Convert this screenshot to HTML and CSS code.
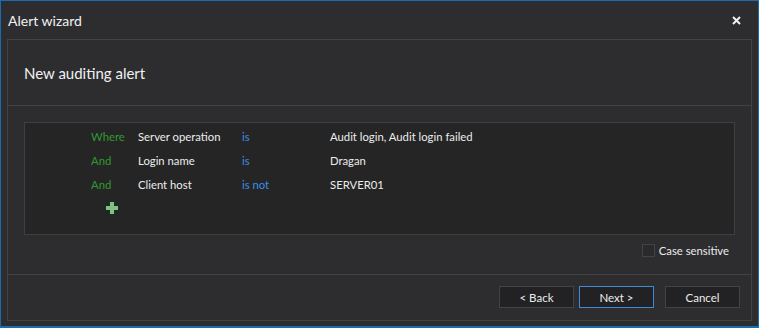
FILE: index.html
```html
<!DOCTYPE html>
<html lang="en">
<head>
    <meta charset="UTF-8">
    <title>Alert wizard</title>
    <link rel="stylesheet" href="styles.css">
</head>
<body>
    <div class="window">
        <div class="titlebar">
            <span class="title">Alert wizard</span>
            <button class="close" title="Close">
                <svg width="9" height="9" viewBox="0 0 9 9">
                    <path d="M1 1 L8 8 M8 1 L1 8" stroke="#f1f1f1" stroke-width="2" />
                </svg>
            </button>
        </div>

        <div class="panel">
            <div class="header">New auditing alert</div>

            <div class="content">
                <div class="filter">
                    <span class="op">Where</span>
                    <span>Server operation</span>
                    <span class="cmp">is</span>
                    <span>Audit login, Audit login failed</span>

                    <span class="op">And</span>
                    <span>Login name</span>
                    <span class="cmp">is</span>
                    <span>Dragan</span>

                    <span class="op">And</span>
                    <span>Client host</span>
                    <span class="cmp">is not</span>
                    <span>SERVER01</span>

                    <span class="add">
                        <svg width="12" height="12" viewBox="0 0 12 12">
                            <path d="M4 0 H8 V4 H12 V8 H8 V12 H4 V8 H0 V4 H4 Z" fill="#7cc47c" />
                        </svg>
                    </span>
                </div>

                <label class="case">
                    <span class="checkbox"></span>
                    Case sensitive
                </label>
            </div>

            <div class="footer">
                <button class="btn">&lt; Back</button>
                <button class="btn primary">Next &gt;</button>
                <button class="btn cancel">Cancel</button>
            </div>
        </div>
    </div>
</body>
</html>
```

FILE: styles.css
```css
* {
    margin: 0;
    padding: 0;
    box-sizing: border-box;
    font-family: 'Segoe UI', Lato, 'Noto Sans', sans-serif;
}

body {
    background: #2d2d30;
    color: #f1f1f1;
    font-size: 11.3px;
}

.window {
    width: 759px;
    height: 328px;
    background: #2d2d30;
    border: 1px solid #1b6bb0;
    border-bottom-width: 2px;
    display: flex;
    flex-direction: column;
}

.titlebar {
    height: 38px;
    display: flex;
    align-items: center;
    justify-content: space-between;
    padding: 0 16px 0 7px;
}

.title {
    font-size: 14px;
    color: #f1f1f1;
}

.close {
    background: none;
    border: none;
    width: 12px;
    height: 12px;
    display: flex;
    align-items: center;
    justify-content: center;
    cursor: pointer;
}

.panel {
    margin: 0 6px;
    height: 282px;
    border: 1px solid #424245;
    display: flex;
    flex-direction: column;
}

.header {
    height: 66px;
    display: flex;
    align-items: center;
    padding-left: 16px;
    font-size: 15px;
    border-bottom: 1px solid #424245;
}

.content {
    height: 169px;
    padding: 16px 16px 0 16px;
    border-bottom: 1px solid #424245;
}

.filter {
    height: 113px;
    background: #252526;
    border: 1px solid #3f3f42;
    display: grid;
    grid-template-columns: 47px 104px 88px 1fr;
    grid-auto-rows: 24px;
    align-items: center;
    padding: 1px 0 0 66px;
    color: #ececec;
}

.op {
    color: #2f9a2f;
}

.cmp {
    color: #3b8fe6;
}

.add {
    grid-column: 1 / span 4;
    display: flex;
    padding-left: 15px;
}

.case {
    display: flex;
    justify-content: flex-end;
    align-items: center;
    gap: 4px;
    margin-top: 9px;
    padding-right: 6px;
    color: #ececec;
}

.checkbox {
    width: 13px;
    height: 13px;
    border: 1px solid #434346;
    background: #2a2a2c;
}

.footer {
    flex: 1;
    display: flex;
    justify-content: flex-end;
    align-items: flex-start;
    gap: 5px;
    padding: 11px 11px 0 0;
}

.btn {
    width: 75px;
    height: 22px;
    background: #222224;
    border: 1px solid #434346;
    color: #ececec;
    font-size: 11.5px;
    cursor: pointer;
}

.btn.primary {
    border-color: #3d8ad6;
}

.btn.cancel {
    margin-left: 6px;
}
```
